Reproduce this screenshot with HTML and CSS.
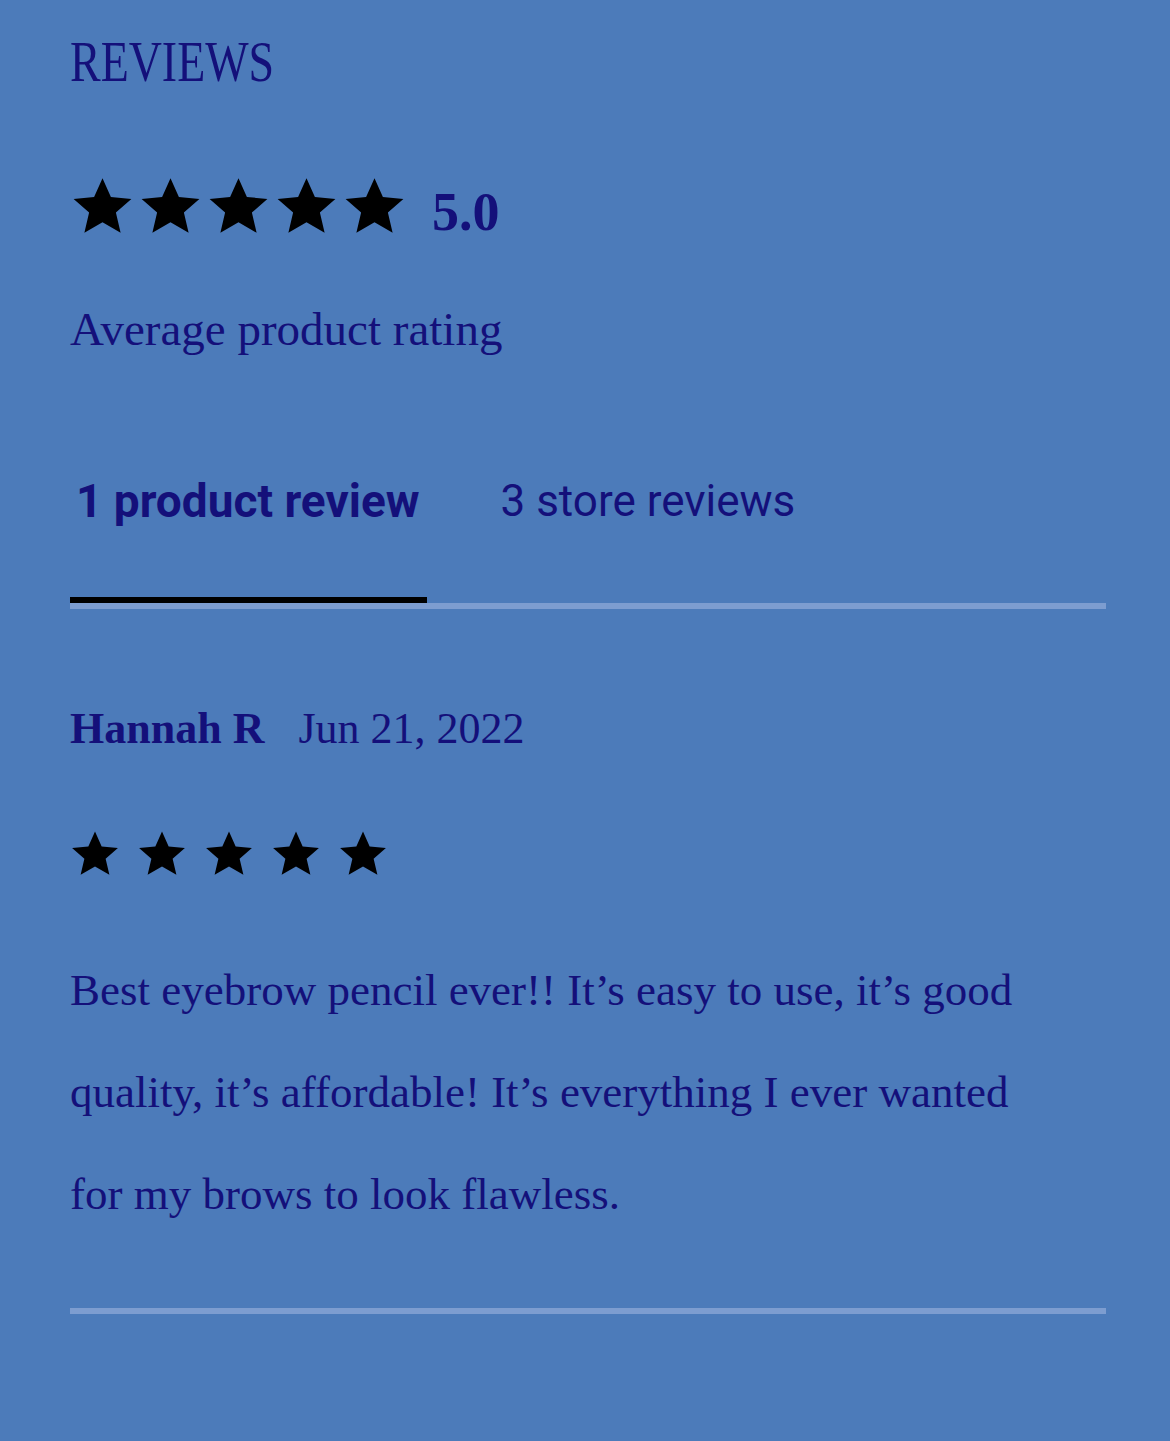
FILE: index.html
```html
<!DOCTYPE html>
<html lang="en">

<head>
    <meta charset="UTF-8">
    <meta name="viewport" content="width=device-width, initial-scale=1.0">
    <title>Reviews</title>
    <link rel="stylesheet" href="styles.css">
</head>

<body>
    <div class="reviews">
        <h2 class="reviews-title"><span>REVIEWS</span></h2>

        <div class="summary">
            <div class="stars stars-large">
                <svg viewBox="0 0 24 24"><polygon points="12,1.2 15.2,8.4 23,9.1 17.1,14.3 18.9,22 12,18 5.1,22 6.9,14.3 1,9.1 8.8,8.4" /></svg>
                <svg viewBox="0 0 24 24"><polygon points="12,1.2 15.2,8.4 23,9.1 17.1,14.3 18.9,22 12,18 5.1,22 6.9,14.3 1,9.1 8.8,8.4" /></svg>
                <svg viewBox="0 0 24 24"><polygon points="12,1.2 15.2,8.4 23,9.1 17.1,14.3 18.9,22 12,18 5.1,22 6.9,14.3 1,9.1 8.8,8.4" /></svg>
                <svg viewBox="0 0 24 24"><polygon points="12,1.2 15.2,8.4 23,9.1 17.1,14.3 18.9,22 12,18 5.1,22 6.9,14.3 1,9.1 8.8,8.4" /></svg>
                <svg viewBox="0 0 24 24"><polygon points="12,1.2 15.2,8.4 23,9.1 17.1,14.3 18.9,22 12,18 5.1,22 6.9,14.3 1,9.1 8.8,8.4" /></svg>
            </div>
            <span class="average">5.0</span>
        </div>
        <p class="average-label">Average product rating</p>

        <div class="tabs">
            <button class="tab active">1 product review</button>
            <button class="tab">3 store reviews</button>
        </div>

        <div class="review">
            <div class="review-head">
                <span class="author">Hannah R</span>
                <span class="date">Jun 21, 2022</span>
            </div>
            <div class="stars stars-small">
                <svg viewBox="0 0 24 24"><polygon points="12,1.2 15.2,8.4 23,9.1 17.1,14.3 18.9,22 12,18 5.1,22 6.9,14.3 1,9.1 8.8,8.4" /></svg>
                <svg viewBox="0 0 24 24"><polygon points="12,1.2 15.2,8.4 23,9.1 17.1,14.3 18.9,22 12,18 5.1,22 6.9,14.3 1,9.1 8.8,8.4" /></svg>
                <svg viewBox="0 0 24 24"><polygon points="12,1.2 15.2,8.4 23,9.1 17.1,14.3 18.9,22 12,18 5.1,22 6.9,14.3 1,9.1 8.8,8.4" /></svg>
                <svg viewBox="0 0 24 24"><polygon points="12,1.2 15.2,8.4 23,9.1 17.1,14.3 18.9,22 12,18 5.1,22 6.9,14.3 1,9.1 8.8,8.4" /></svg>
                <svg viewBox="0 0 24 24"><polygon points="12,1.2 15.2,8.4 23,9.1 17.1,14.3 18.9,22 12,18 5.1,22 6.9,14.3 1,9.1 8.8,8.4" /></svg>
            </div>
            <p class="review-body">Best eyebrow pencil ever!! It’s easy to use, it’s good quality, it’s affordable! It’s everything I ever wanted for my brows to look flawless.</p>
        </div>
    </div>
</body>

</html>
```

FILE: styles.css
```css
body {
    margin: 0;
    background-color: #4c7bba;
    color: #14107a;
    font-family: 'Liberation Serif', serif;
}

.reviews {
    padding: 30px 64px 120px 70px;
}

.reviews-title {
    margin: 0;
    font-weight: normal;
    font-size: 56px;
    line-height: 64px;
}

.reviews-title span {
    display: inline-block;
    transform: scaleX(0.82);
    transform-origin: left center;
}

.summary {
    display: flex;
    align-items: center;
    gap: 26px;
    margin-top: 75px;
}

.stars {
    display: flex;
}

.stars svg {
    fill: #000;
}

.stars-large {
    gap: 5px;
    margin-left: 1px;
}

.stars-large svg {
    width: 63px;
    height: 63px;
}

.stars-small {
    gap: 17px;
    margin-top: 76px;
}

.stars-small svg {
    width: 50px;
    height: 50px;
}

.average {
    font-size: 54px;
    font-weight: bold;
    margin-top: 12px;
}

.average-label {
    margin: 62px 0 0;
    font-size: 47px;
    line-height: 48px;
}

.tabs {
    display: flex;
    gap: 68px;
    margin-top: 124px;
    border-bottom: 6px solid #7d9dd0;
}

.tab {
    background: none;
    border: none;
    padding: 0 7px 72px 6px;
    font-family: Roboto, 'Liberation Sans', sans-serif;
    font-size: 44px;
    color: #14107a;
    border-bottom: 6px solid transparent;
    line-height: 48px;
}

.tab.active {
    font-size: 46px;
    font-weight: bold;
    border-bottom-color: #000;
}

.review {
    padding-top: 96px;
    border-bottom: 6px solid #7d9dd0;
}

.review-head {
    display: flex;
    gap: 34px;
    font-size: 44px;
    line-height: 48px;
}

.author {
    font-weight: bold;
}

.review-body {
    max-width: 980px;
    margin: 60px 0 0;
    padding-bottom: 63px;
    font-size: 45px;
    line-height: 102px;
}
```
